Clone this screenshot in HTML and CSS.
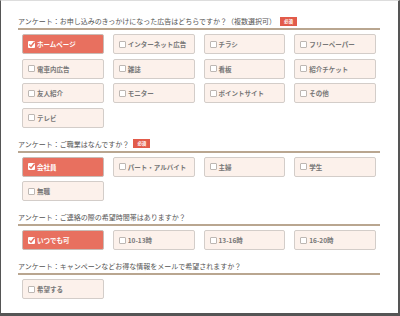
FILE: index.html
```html
<!DOCTYPE html>
<html lang="ja">
<head>
  <meta charset="UTF-8" />
  <title>アンケート</title>
  <link rel="stylesheet" href="styles.css">
</head>
<body>
<div class="frame">

  <div class="survey">
    <h3 class="survey-title">アンケート：お申し込みのきっかけになった広告はどちらですか？（複数選択可）<span class="req">必須</span></h3>
    <div class="choices">
      <label class="choice on"><span class="box"><svg viewBox="0 0 7 7"><path d="M1.3 3.6 L3 5.2 L6.6 0.8" /></svg></span>ホームページ</label>
      <label class="choice"><span class="box"></span>インターネット広告</label>
      <label class="choice"><span class="box"></span>チラシ</label>
      <label class="choice"><span class="box"></span>フリーペーパー</label>
      <label class="choice"><span class="box"></span>電車内広告</label>
      <label class="choice"><span class="box"></span>雑誌</label>
      <label class="choice"><span class="box"></span>看板</label>
      <label class="choice"><span class="box"></span>紹介チケット</label>
      <label class="choice"><span class="box"></span>友人紹介</label>
      <label class="choice"><span class="box"></span>モニター</label>
      <label class="choice"><span class="box"></span>ポイントサイト</label>
      <label class="choice"><span class="box"></span>その他</label>
      <label class="choice"><span class="box"></span>テレビ</label>
    </div>
  </div>

  <div class="survey">
    <h3 class="survey-title">アンケート：ご職業はなんですか？<span class="req">必須</span></h3>
    <div class="choices">
      <label class="choice on"><span class="box"><svg viewBox="0 0 7 7"><path d="M1.3 3.6 L3 5.2 L6.6 0.8" /></svg></span>会社員</label>
      <label class="choice"><span class="box"></span>パート・アルバイト</label>
      <label class="choice"><span class="box"></span>主婦</label>
      <label class="choice"><span class="box"></span>学生</label>
      <label class="choice"><span class="box"></span>無職</label>
    </div>
  </div>

  <div class="survey">
    <h3 class="survey-title">アンケート：ご連絡の際の希望時間帯はありますか？</h3>
    <div class="choices">
      <label class="choice on"><span class="box"><svg viewBox="0 0 7 7"><path d="M1.3 3.6 L3 5.2 L6.6 0.8" /></svg></span>いつでも可</label>
      <label class="choice"><span class="box"></span>10-13時</label>
      <label class="choice"><span class="box"></span>13-16時</label>
      <label class="choice"><span class="box"></span>16-20時</label>
    </div>
  </div>

  <div class="survey">
    <h3 class="survey-title">アンケート：キャンペーンなどお得な情報をメールで希望されますか？</h3>
    <div class="choices">
      <label class="choice"><span class="box"></span>希望する</label>
    </div>
  </div>

</div>
</body>
</html>
```

FILE: styles.css
```css
body {
  margin: 0;
  font-family: "Noto Sans CJK JP", "Noto Sans", sans-serif;
  background: #fff;
}
.frame {
  box-sizing: border-box;
  width: 400px;
  height: 316px;
  padding: 15px 18px 0 17px;
  border: 1px solid #555;
  border-top-color: #ddd;
  border-right-width: 2px;
  border-bottom-width: 3px;
  overflow: hidden;
}
.survey + .survey {
  margin-top: 11px;
}
.survey-title {
  display: flex;
  align-items: center;
  margin: 0;
  padding-bottom: 2px;
  font-size: 7px;
  line-height: 10px;
  font-weight: normal;
  color: #555;
  border-bottom: 2px solid #b9a690;
}
.req {
  margin-left: 4px;
  width: 17px;
  height: 9px;
  background: #e25b4a;
  color: #fff;
  font-size: 4.5px;
  font-weight: bold;
  line-height: 9px;
  text-align: center;
}
.choices {
  display: grid;
  grid-template-columns: repeat(4, 1fr);
  column-gap: 9px;
  row-gap: 4.6px;
  margin-top: 4px;
  padding: 0 4px;
}
.choice {
  box-sizing: border-box;
  display: flex;
  align-items: center;
  height: 20px;
  padding-left: 5px;
  background: #fcf1eb;
  border: 1px solid #d3cdc9;
  border-radius: 2px;
  font-size: 6.5px;
  font-weight: bold;
  color: #777;
  white-space: nowrap;
}
.choice.on {
  background: #e8705f;
  color: #fff;
  border-color: #c9bcb6;
}
.box {
  box-sizing: border-box;
  width: 7px;
  height: 7px;
  margin-right: 2px;
  background: #fff;
  border: 1px solid #bdb7b3;
  border-radius: 1px;
  flex: none;
}
.choice.on .box {
  border: none;
}
.box svg {
  display: block;
  width: 7px;
  height: 7px;
}
.box path {
  fill: none;
  stroke: #e8705f;
  stroke-width: 1.4;
}
```
